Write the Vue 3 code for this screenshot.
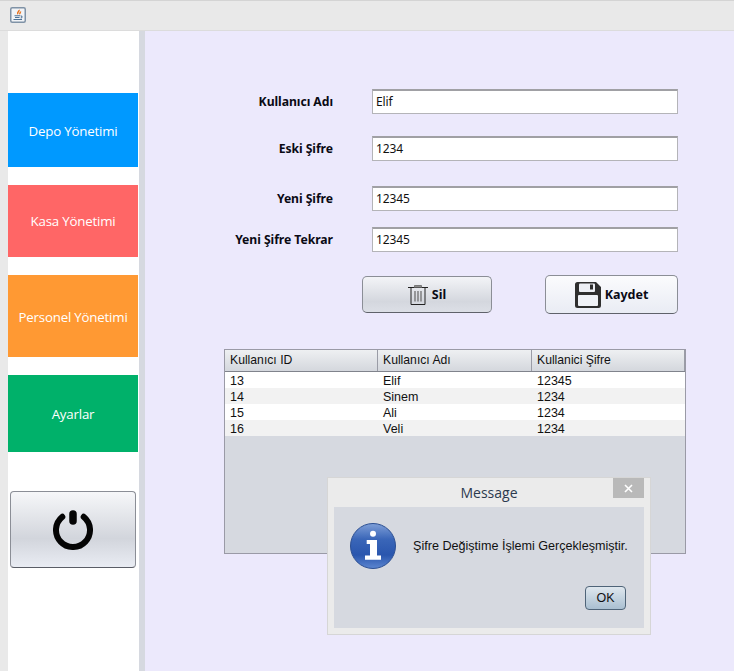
<script setup>
const menu = [
  { label: "Depo Yönetimi", cls: "blue" },
  { label: "Kasa Yönetimi", cls: "red" },
  { label: "Personel Yönetimi", cls: "orange" },
  { label: "Ayarlar", cls: "green" }
];

const fields = [
  { label: "Kullanıcı Adı", value: "Elif", cls: "f1" },
  { label: "Eski Şifre", value: "1234", cls: "f2" },
  { label: "Yeni Şifre", value: "12345", cls: "f3" },
  { label: "Yeni Şifre Tekrar", value: "12345", cls: "f4" }
];

const rows = [
  ["13", "Elif", "12345"],
  ["14", "Sinem", "1234"],
  ["15", "Ali", "1234"],
  ["16", "Veli", "1234"]
];
</script>

<template>
  <div class="window">
    <div class="titlebar">
      <div class="java-icon">
        <svg width="16" height="16" viewBox="0 0 16 16">
          <rect x="0.75" y="0.75" width="14.5" height="14.5" rx="1.5" fill="#f1f3f6" stroke="#7f92a6" stroke-width="1.5" />
          <path d="M9 2.800c.8 1.400-2.300 2.200-1.200 4.400M10.500 4.500c.3 1-1.200 1.600-.6 2.800" fill="none" stroke="#e8701a" stroke-width="1.400" />
          <path d="M4.500 8.800h5.500M5 10.500h4.500M3.500 12.500h8.500M10.500 8.800c2 0 2 2.100.2 2.300" fill="none" stroke="#4f7396" stroke-width="1.100" />
        </svg>
      </div>
    </div>
    <div class="body">
      <aside class="sidebar">
        <button v-for="m in menu" :key="m.label" class="menu-btn" :class="m.cls">{{ m.label }}</button>
        <button class="power">
          <svg width="40" height="40" viewBox="0 0 40 40">
            <path d="M9.300 6.800A17 17 0 1 0 30.700 6.800" fill="none" stroke="#050505" stroke-width="6" stroke-linecap="round" />
            <path d="M20 4v7" fill="none" stroke="#050505" stroke-width="7.500" stroke-linecap="round" />
          </svg>
        </button>
      </aside>
      <div class="divider"></div>
      <main class="content">
        <div class="form">
          <div v-for="f in fields" :key="f.label" class="field" :class="f.cls">
            <label>{{ f.label }}</label>
            <div class="input">{{ f.value }}</div>
          </div>
        </div>
        <div class="actions">
          <button class="action sil">
            <svg width="20" height="20" viewBox="0 0 20 20">
              <path d="M0 2.500h20" stroke="#222" stroke-width="1" />
              <path d="M6.500 2.500V.5h7v2" fill="#8c8c8c" stroke="#777" stroke-width="1" />
              <path d="M3 2.500v17h14v-17" fill="none" stroke="#222" stroke-width="1" />
              <path d="M7 6v10.500M10 6v10.500M13 6v10.500" stroke="#666" stroke-width="1.200" />
            </svg>
            <span>Sil</span>
          </button>
          <button class="action kaydet">
            <svg width="26" height="26" viewBox="0 0 26 26">
              <path d="M2.500 0H21l5 5v18.500a2.500 2.500 0 0 1-2.500 2.500h-21A2.500 2.500 0 0 1 0 23.500v-21A2.500 2.500 0 0 1 2.500 0z" fill="#2f2f2f" />
              <rect x="4" y="1.500" width="16" height="8.500" rx="1" fill="#edeff5" />
              <rect x="15" y="2.500" width="3" height="5" fill="#2f2f2f" />
              <rect x="3" y="13" width="20" height="11" rx="1" fill="#f0f2f7" />
            </svg>
            <span>Kaydet</span>
          </button>
        </div>
        <div class="table">
          <div class="thead">
            <div class="th">Kullanıcı ID</div>
            <div class="th">Kullanıcı Adı</div>
            <div class="th">Kullanici Şifre</div>
          </div>
          <div v-for="r in rows" :key="r[0]" class="tr">
            <div v-for="c in r" :key="c" class="td">{{ c }}</div>
          </div>
        </div>
      </main>
    </div>

    <div class="dialog">
      <div class="dialog-title">
        <span>Message</span>
        <div class="close">
          <svg width="9" height="9" viewBox="0 0 9 9">
            <path d="M1 1l7 7M8 1L1 8" stroke="#fff" stroke-width="1.600" />
          </svg>
        </div>
      </div>
      <div class="dialog-body">
        <div class="dialog-msg">
          <svg width="46" height="46" viewBox="0 0 46 46">
            <defs>
              <linearGradient id="info" x1="0" y1="0" x2="0" y2="1">
                <stop offset="0" stop-color="#7f9fd8" />
                <stop offset="0.35" stop-color="#3a66b8" />
                <stop offset="0.7" stop-color="#2a56ae" />
                <stop offset="1" stop-color="#5c86d0" />
              </linearGradient>
            </defs>
            <circle cx="23" cy="23" r="22.500" fill="url(#info)" stroke="#2c4f92" />
            <circle cx="23" cy="10.700" r="3" fill="#fff" />
            <path d="M16.700 17H27v15.500h4v4.200H15v-4.200h5V21h-3.300z" fill="#fff" />
          </svg>
          <span>Şifre Değiştime İşlemi Gerçekleşmiştir.</span>
        </div>
        <button class="ok">OK</button>
      </div>
    </div>
  </div>
</template>

<style scoped>
.window {
  position: relative;
  width: 734px;
  height: 671px;
  overflow: hidden;
  background: #e9e9e9;
  display: flex;
  flex-direction: column;
  box-sizing: border-box;
  border-top: 1px solid #d4d4d4;
  font-family: "Liberation Sans", Arial, sans-serif;
}

.titlebar {
  height: 30px;
  flex: none;
  padding: 6px 0 0 10px;
  box-sizing: border-box;
  border-bottom: 1px solid #dcdcdc;
}

.java-icon {
  width: 16px;
  height: 16px;
}

.java-icon svg {
  display: block;
}

.body {
  flex: 1;
  display: flex;
  min-height: 0;
  padding-left: 8px;
}

.sidebar {
  width: 131px;
  flex: none;
  background: #fff;
  display: flex;
  flex-direction: column;
  align-items: flex-start;
}

.menu-btn {
  width: 130px;
  border: 0;
  padding: 0;
  color: #fff;
  font-family: "Open Sans", sans-serif;
  font-size: 13.300px;
  letter-spacing: -0.2px;
}

.blue {
  height: 74px;
  margin-top: 62px;
  padding-top: 2px;
  background: #0099ff;
}

.red {
  height: 72px;
  margin-top: 18px;
  background: #ff6666;
}

.orange {
  height: 82px;
  margin-top: 18px;
  padding-top: 2px;
  background: #ff9933;
}

.green {
  height: 77px;
  margin-top: 18px;
  background: #00b16a;
}

.power {
  width: 126px;
  height: 77px;
  margin: 39px 0 0 2px;
  padding: 0;
  display: flex;
  align-items: center;
  justify-content: center;
  border: 1px solid #8b8e96;
  border-bottom-color: #5a5d66;
  border-radius: 4px;
  background: linear-gradient(#f6f7f9, #d2d5dc 62%, #e9ecf3);
}

.divider {
  width: 6px;
  flex: none;
  background: #d6d9e0;
}

.content {
  flex: 1;
  background: #ece9fc;
  display: flex;
  flex-direction: column;
  padding: 58px 0 0 79px;
  min-width: 0;
}

.field {
  display: flex;
  align-items: center;
  gap: 39px;
  height: 25px;
}

.f2 {
  margin-top: 22px;
}

.f3 {
  margin-top: 25px;
}

.f4 {
  margin-top: 16px;
}

.field label {
  width: 109px;
  text-align: right;
  white-space: nowrap;
  font-family: "Noto Sans", sans-serif;
  font-size: 12.200px;
  font-weight: 700;
  letter-spacing: -0.05px;
  color: #0a0a14;
}

.input {
  width: 306px;
  height: 25px;
  box-sizing: border-box;
  padding-left: 3px;
  line-height: 21px;
  background: #fff;
  border: 1px solid #b4b4b8;
  border-top: 2px solid #a0a0a4;
  font-family: "Noto Sans", sans-serif;
  font-size: 12px;
  letter-spacing: -0.1px;
  color: #111;
}

.actions {
  display: flex;
  align-items: center;
  margin: 23px 0 0 138px;
  height: 39px;
}

.action {
  display: flex;
  align-items: center;
  justify-content: center;
  padding: 0;
  border: 1px solid #8b8e96;
  border-bottom-color: #5f626a;
  border-radius: 5px;
  font-family: "Noto Sans", sans-serif;
  font-weight: 700;
  font-size: 12.500px;
  color: #0a0a14;
}

.sil {
  width: 130px;
  height: 37px;
  gap: 4px;
  background: linear-gradient(#f3f4f7, #d4d7de 70%, #dcdfe6);
}

.kaydet {
  width: 133px;
  height: 39px;
  margin-left: 53px;
  gap: 4px;
  background: linear-gradient(#fbfbfd, #e9ecf4);
}

.table {
  width: 462px;
  height: 205px;
  box-sizing: border-box;
  margin-top: 35px;
  background: #d6d9e0;
  border: 1px solid #9a9aa6;
  font-size: 12.200px;
  color: #111;
}

.thead {
  display: grid;
  grid-template-columns: 153px 154px 1fr;
  height: 22px;
  border-bottom: 1px solid #80838c;
  box-sizing: border-box;
  background: linear-gradient(#eef0f2, #d4d7dd);
}

.th {
  padding-left: 5px;
  line-height: 21px;
  border-right: 1px solid #9a9ca6;
}

.tr {
  display: grid;
  grid-template-columns: 153px 154px 1fr;
  height: 16px;
  line-height: 18px;
  background: #fff;
  font-size: 12.500px;
}

.tr:nth-child(odd) {
  background: #f2f2f2;
}

.td {
  padding-left: 5px;
}

.dialog {
  position: absolute;
  left: 327px;
  top: 476px;
  width: 324px;
  height: 158px;
  box-sizing: border-box;
  background: #ebebeb;
  border: 1px solid #d6d6d6;
  padding: 0 6px 6px;
  display: flex;
  flex-direction: column;
}

.dialog-title {
  position: relative;
  height: 29px;
  flex: none;
  text-align: center;
  line-height: 29px;
  font-family: "Open Sans", sans-serif;
  font-size: 14px;
  color: #2b3a4e;
}

.close {
  position: absolute;
  right: 0;
  top: 0;
  width: 31px;
  height: 20px;
  background: #b9b9b9;
  display: flex;
  align-items: center;
  justify-content: center;
}

.dialog-body {
  flex: 1;
  background: #d6d9e0;
  display: flex;
  flex-direction: column;
  font-size: 12.600px;
  color: #111;
}

.dialog-msg {
  display: flex;
  align-items: center;
  gap: 17px;
  padding: 16px 0 0 16px;
}

.ok {
  width: 41px;
  height: 24px;
  align-self: flex-end;
  margin: 17px 18px 0 0;
  padding: 0;
  border: 1px solid #4f6478;
  border-radius: 4px;
  background: linear-gradient(#dfe7ee, #a9bfd1);
  font-family: "Liberation Sans", sans-serif;
  font-size: 12.500px;
  color: #111;
}
</style>

<style>
html,
body {
  margin: 0;
  overflow: hidden;
}
</style>
